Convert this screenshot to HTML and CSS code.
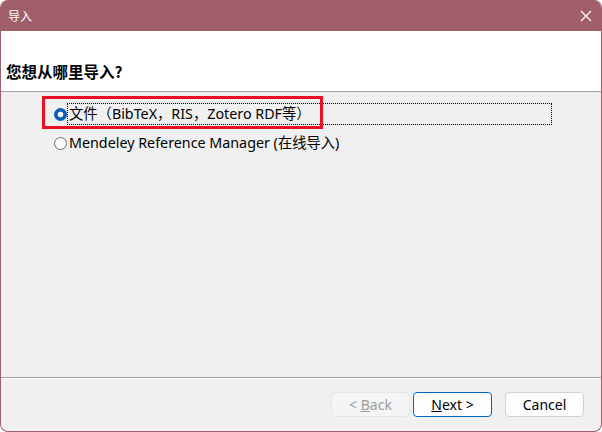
FILE: index.html
```html
<!DOCTYPE html>
<html lang="zh">
<head>
<meta charset="utf-8">
<title>导入</title>
<link rel="stylesheet" href="styles.css">
</head>
<body>
<div class="window">
  <div class="titlebar">
    <span class="title">导入</span>
    <svg class="close" width="12" height="12" viewBox="0 0 12 12"><path d="M1 1L11 11M11 1L1 11" stroke="#fff" stroke-width="1.2" fill="none"/></svg>
  </div>
  <div class="header">
    <h1 class="heading">您想从哪里导入?</h1>
  </div>
  <div class="content">
    <div class="option first">
      <span class="radio checked"></span>
      <span class="label focus">文件（BibTeX，RIS，Zotero RDF等）</span>
    </div>
    <div class="option">
      <span class="radio"></span>
      <span class="label">Mendeley Reference Manager (在线导入)</span>
    </div>
    <div class="highlight"></div>
  </div>
  <div class="footer">
    <button class="btn disabled"><span>&lt; <u>B</u>ack</span></button>
    <button class="btn default"><span><u>N</u>ext &gt;</span></button>
    <button class="btn cancel">Cancel</button>
  </div>
</div>
</body>
</html>
```
FILE: styles.css
```css
html, body {
  margin: 0;
  padding: 0;
  background: #fff;
}
.window {
  width: 602px;
  height: 432px;
  box-sizing: border-box;
  border: 1px solid #a05e6b;
  border-top: none;
  border-radius: 8px;
  background: #f0f0f0;
  display: flex;
  flex-direction: column;
  overflow: hidden;
  font-family: "Segoe UI", "Noto Sans", "Noto Sans CJK SC", sans-serif;
}
.titlebar {
  height: 31px;
  background: #a05e6b;
  display: flex;
  align-items: center;
  justify-content: space-between;
  padding: 0 10px 0 8px;
  margin: 0 -1px;
  color: #fff;
  font-size: 12px;
  font-family: "Noto Sans CJK SC", sans-serif;
}
.title { margin-top: -1px; }
.header {
  height: 60px;
  background: #fff;
  border-bottom: 1px solid #a0a0a0;
  display: flex;
  align-items: center;
  padding-left: 5px;
}
.heading {
  margin: 20px 0 0 0;
  font-size: 15.5px;
  font-weight: bold;
  color: #000;
  font-family: "Noto Sans CJK SC", sans-serif;
}
.content {
  flex: 1;
  position: relative;
  padding: 11px 0 0 53px;
  border-bottom: 1px solid #a0a0a0;
}
.option {
  display: flex;
  align-items: center;
  height: 22px;
  margin-bottom: 7px;
  font-size: 14.3px;
  color: #000;
}
.radio {
  width: 13px;
  height: 13px;
  border-radius: 50%;
  border: 1px solid #707070;
  background: #fafafa;
  box-sizing: border-box;
  margin-right: 1px;
  flex: none;
}
.radio.checked {
  border: none;
  background: radial-gradient(circle, #fff 0 2.5px, #0a5fb8 3.2px);
}
.label {
  line-height: 20px;
  padding: 0 1px;
  white-space: nowrap;
}
.label.focus {
  width: 485px;
  border: 1px dotted #000;
  box-sizing: border-box;
  margin-left: -1px;
}
.highlight {
  position: absolute;
  left: 41px;
  top: 4px;
  width: 275px;
  height: 27px;
  border: 3px solid #e81123;
}
.footer {
  height: 53px;
  box-sizing: border-box;
  border-top: 1px solid #fff;
  display: flex;
  align-items: flex-start;
  padding: 13px 0 0 330px;
}
.btn {
  width: 79px;
  height: 25px;
  box-sizing: border-box;
  border-radius: 4px;
  border: 1px solid #d0d0d0;
  background: #fdfdfd;
  font-family: "Segoe UI", "Noto Sans", sans-serif;
  font-size: 14px;
  color: #000;
  padding: 0;
  margin-right: 3px;
}
.btn.disabled {
  background: #f5f5f5;
  border-color: #e5e5e5;
  color: #9d9d9d;
}
.btn.default {
  border-color: #0067c0;
}
.btn.cancel {
  margin-left: 10px;
}
```
